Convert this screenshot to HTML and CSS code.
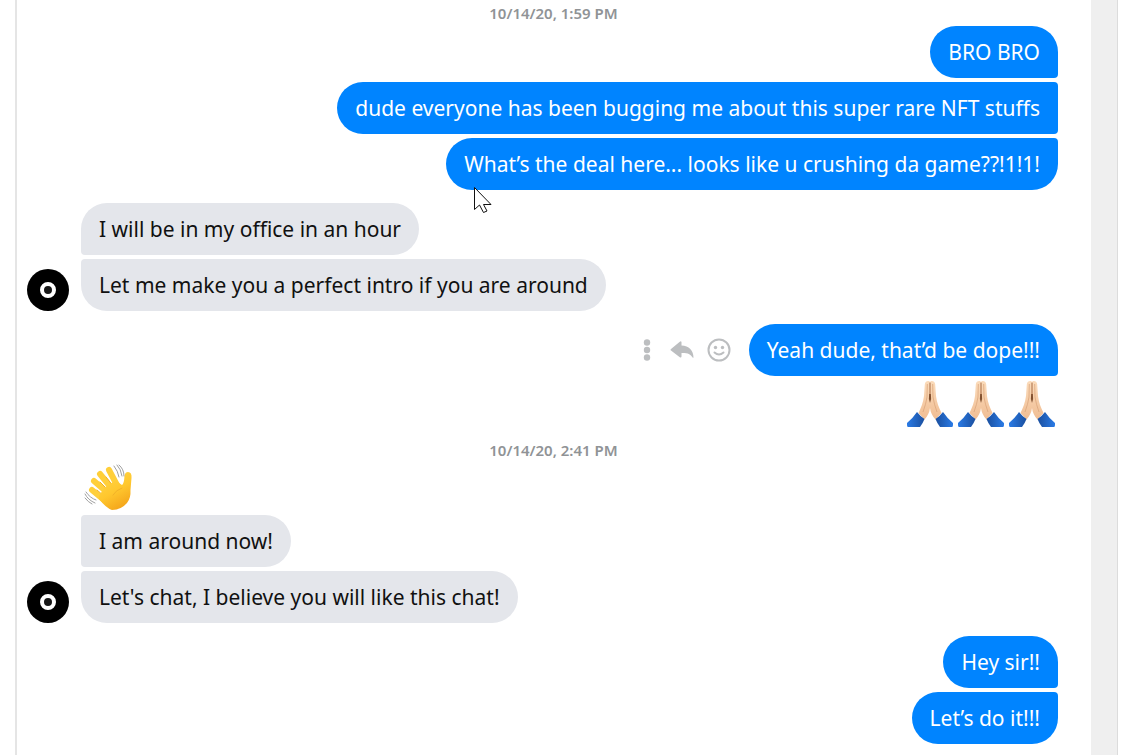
FILE: index.html
```html
<!DOCTYPE html>
<html lang="en">
<head>
    <meta charset="UTF-8">
    <meta name="viewport" content="width=device-width, initial-scale=1.0">
    <title>Chat</title>
    <link rel="stylesheet" href="styles.css">
</head>
<body>
    <!-- Shared drawings -->
    <svg class="defs" aria-hidden="true">
        <defs>
            <linearGradient id="skin" x1="0" y1="0" x2="0" y2="1">
                <stop offset="0" stop-color="#fbdcbb"/>
                <stop offset="1" stop-color="#f0bd93"/>
            </linearGradient>
            <linearGradient id="sleeve-left" x1="0" y1="0" x2="1" y2="0">
                <stop offset="0" stop-color="#2a7be6"/>
                <stop offset="1" stop-color="#1b4f9e"/>
            </linearGradient>
            <linearGradient id="sleeve-right" x1="0" y1="0" x2="1" y2="0">
                <stop offset="0" stop-color="#1b4f9e"/>
                <stop offset="1" stop-color="#2a7be6"/>
            </linearGradient>
            <linearGradient id="wave-skin" x1="0" y1="0" x2="0.5" y2="1">
                <stop offset="0" stop-color="#ffd84a"/>
                <stop offset="0.6" stop-color="#ffc72e"/>
                <stop offset="1" stop-color="#f5a81c"/>
            </linearGradient>
            <symbol id="pray" viewBox="0 0 48 48">
                <path fill="url(#skin)" d="M23 1C20.500 .500 19 2 18.800 4.500L18 16C17.300 22 15 28 12.500 33L18.500 39.500C21.500 36 23.300 33 24 28C24.700 33 26.500 36 29.500 39.500L35.500 33C33 28 30.700 22 30 16L29.200 4.500C29 2 27.500 .500 25 1L24 2Z"/>
                <path fill="none" stroke="#dba67c" stroke-width="0.800" d="M21.300 4L21 17Q20 24 17 32M26.700 4L27 17Q28 24 31 32"/>
                <path fill="none" stroke="#a86c45" stroke-width="1" stroke-linecap="round" d="M24 3V17"/>
                <path fill="#80502f" d="M23.200 14H24.800L25.100 19L24 23L22.900 19Z"/>
                <path fill="url(#sleeve-left)" d="M11 32Q14 36 18.500 39Q17 43 14 47H2Q1 47 1 45V43Q7 38 11 32Z"/>
                <path fill="url(#sleeve-right)" d="M37 32Q34 36 29.500 39Q31 43 34 47H46Q47 47 47 45V43Q41 38 37 32Z"/>
            </symbol>
            <symbol id="avatar" viewBox="0 0 42 42">
                <circle cx="21" cy="21" r="21" fill="#000"/>
                <circle cx="21" cy="21" r="6" fill="#161616" stroke="#fff" stroke-width="4"/>
            </symbol>
        </defs>
    </svg>

    <div class="window">
        <main class="chat">
            <time class="timestamp">10/14/20, 1:59 PM</time>

            <section class="group sent">
                <p class="bubble">BRO BRO</p>
                <p class="bubble">dude everyone has been bugging me about this super rare NFT stuffs</p>
                <p class="bubble">What’s the deal here... looks like u crushing da game??!1!1!
                    <svg class="cursor" viewBox="0 0 20 28" aria-hidden="true">
                        <path fill="#fff" stroke="#111" d="M1.500 1.500V23.500L6.500 19L10.500 26.500L14 25L10.500 18.500H18Z"/>
                    </svg>
                </p>
            </section>

            <section class="group received">
                <svg class="avatar" role="img" aria-label="Profile picture"><use href="#avatar"/></svg>
                <div class="messages">
                    <p class="bubble">I will be in my office in an hour</p>
                    <p class="bubble">Let me make you a perfect intro if you are around</p>
                </div>
            </section>

            <section class="group sent">
                <div class="message-row">
                    <div class="actions">
                        <button type="button" class="more" aria-label="More">
                            <svg width="8" height="22" viewBox="0 0 8 22" fill="currentColor">
                                <circle cx="4" cy="3.500" r="3.200"/>
                                <circle cx="4" cy="11" r="3.200"/>
                                <circle cx="4" cy="18.500" r="3.200"/>
                            </svg>
                        </button>
                        <button type="button" class="reply" aria-label="Reply">
                            <svg width="24" height="18" viewBox="0 0 24 18" fill="currentColor">
                                <path d="M11.500 1.200V4.500C19 4.800 23.500 9.500 23.500 16.500Q23.300 17.200 22.600 16.500C20.500 13 17.500 11.800 11.500 12V15.500Q11.300 17.200 9.800 16.200L1 9.500Q0 8.700 1 7.900L9.800 .700Q11.300 -.300 11.500 1.200Z"/>
                            </svg>
                        </button>
                        <button type="button" class="react" aria-label="React">
                            <svg width="24" height="24" viewBox="0 0 24 24" fill="none" stroke="currentColor" stroke-width="2">
                                <circle cx="12" cy="12" r="10.500"/>
                                <path d="M7.500 14.500Q12 18.500 16.500 14.500" stroke-linecap="round"/>
                                <circle cx="8.500" cy="9.500" r="1.700" fill="currentColor" stroke="none"/>
                                <circle cx="15.500" cy="9.500" r="1.700" fill="currentColor" stroke="none"/>
                            </svg>
                        </button>
                    </div>
                    <p class="bubble">Yeah dude, that’d be dope!!!</p>
                </div>
                <div class="emoji-row" role="img" aria-label="Folded hands, three times">
                    <svg class="emoji"><use href="#pray"/></svg>
                    <svg class="emoji"><use href="#pray"/></svg>
                    <svg class="emoji"><use href="#pray"/></svg>
                </div>
            </section>

            <time class="timestamp">10/14/20, 2:41 PM</time>

            <section class="group received">
                <svg class="avatar" role="img" aria-label="Profile picture"><use href="#avatar"/></svg>
                <div class="messages">
                    <svg class="emoji wave" viewBox="0 0 48 48" role="img" aria-label="Waving hand">
                        <g fill="none" stroke-linecap="round">
                            <path stroke="#ffcf3a" stroke-width="6" d="M8 27L20 37M10 18L25 31M16 11L29 27M25 7L34 24"/>
                            <path stroke="#f0b02a" stroke-width="1" d="M13 27L20 33M16 19L24 27M22 14L29 23"/>
                        </g>
                        <path fill="url(#wave-skin)" d="M15 33L20 25L32 17Q36 21 38 22Q40 21 40.500 13Q41 9 44 9Q48 9 47.500 15L46.500 27Q47 35 43 40Q37 47 28 47Q22 45 15 36Z"/>
                        <path fill="none" stroke="#f2b229" stroke-width="1" stroke-linecap="round" d="M29 32Q32 27 38 25"/>
                        <path fill="none" stroke="#a0a0a0" stroke-width="1" stroke-linecap="round" d="M30 3Q34 8 35 14M33 2Q37 6 38 13M35 2Q40 6 40 13M2 29Q6 35 12 37M1 31Q4 37 11 40M1 35Q4 39 8 41"/>
                    </svg>
                    <p class="bubble">I am around now!</p>
                    <p class="bubble">Let's chat, I believe you will like this chat!</p>
                </div>
            </section>

            <section class="group sent">
                <p class="bubble">Hey sir!!</p>
                <p class="bubble">Let’s do it!!!</p>
            </section>
        </main>
        <div class="scroll-track"></div>
    </div>
</body>
</html>
```
FILE: styles.css
```css
* {
    box-sizing: border-box;
}

body {
    margin: 0;
    background: #fff;
    color: #111;
    font-family: "Noto Sans", "Open Sans", sans-serif;
    font-size: 21px;
    line-height: 30px;
}

p {
    margin: 0;
}

.defs {
    position: absolute;
    width: 0;
    height: 0;
}

.window {
    display: flex;
    min-height: 100vh;
    margin: 0 8px 0 15px;
    border-left: 2px solid #e5e5e5;
    border-right: 1px solid #dcdcdc;
}

.chat {
    flex: 1;
    padding: 4px 33px 11px 10px;
}

.scroll-track {
    width: 26px;
    background: #efefef;
}

.timestamp {
    display: block;
    margin: 0 -22px 4px 0;
    text-align: center;
    color: #909396;
    font-size: 15px;
    font-weight: 600;
    line-height: 18px;
}

.group {
    display: flex;
    margin-bottom: 13px;
}

.group:last-child {
    margin-bottom: 0;
}

.sent {
    flex-direction: column;
    align-items: flex-end;
    gap: 4px;
}

.received {
    align-items: flex-end;
    gap: 12px;
}

.messages {
    display: flex;
    flex-direction: column;
    align-items: flex-start;
    gap: 4px;
}

.avatar {
    width: 42px;
    height: 42px;
}

.bubble {
    position: relative;
    padding: 11px 18px;
    border-radius: 26px;
}

.sent .bubble {
    background: #0084ff;
    color: #fff;
    border-top-right-radius: 4px;
    border-bottom-right-radius: 4px;
}

.sent > .bubble:first-child,
.message-row .bubble {
    border-top-right-radius: 26px;
}

.sent > .bubble:last-child {
    border-bottom-right-radius: 26px;
}

.received .bubble {
    background: #e4e6eb;
    border-top-left-radius: 4px;
    border-bottom-left-radius: 4px;
}

.received .bubble:first-child {
    border-top-left-radius: 26px;
}

.received .bubble:last-child {
    border-bottom-left-radius: 26px;
}

.cursor {
    position: absolute;
    left: 27px;
    top: 48px;
    width: 20px;
    height: 28px;
}

.message-row,
.actions {
    display: flex;
    align-items: center;
}

.actions {
    gap: 13px;
    margin-right: 18px;
}

.actions button {
    display: flex;
    padding: 0;
    border: none;
    background: none;
    color: #bcbec0;
    cursor: pointer;
}

.more {
    margin-right: 6px;
}

.emoji-row {
    display: flex;
    gap: 3px;
    margin-right: 2px;
}

.emoji {
    width: 48px;
    height: 48px;
}

.wave {
    margin-left: 3px;
}
```
